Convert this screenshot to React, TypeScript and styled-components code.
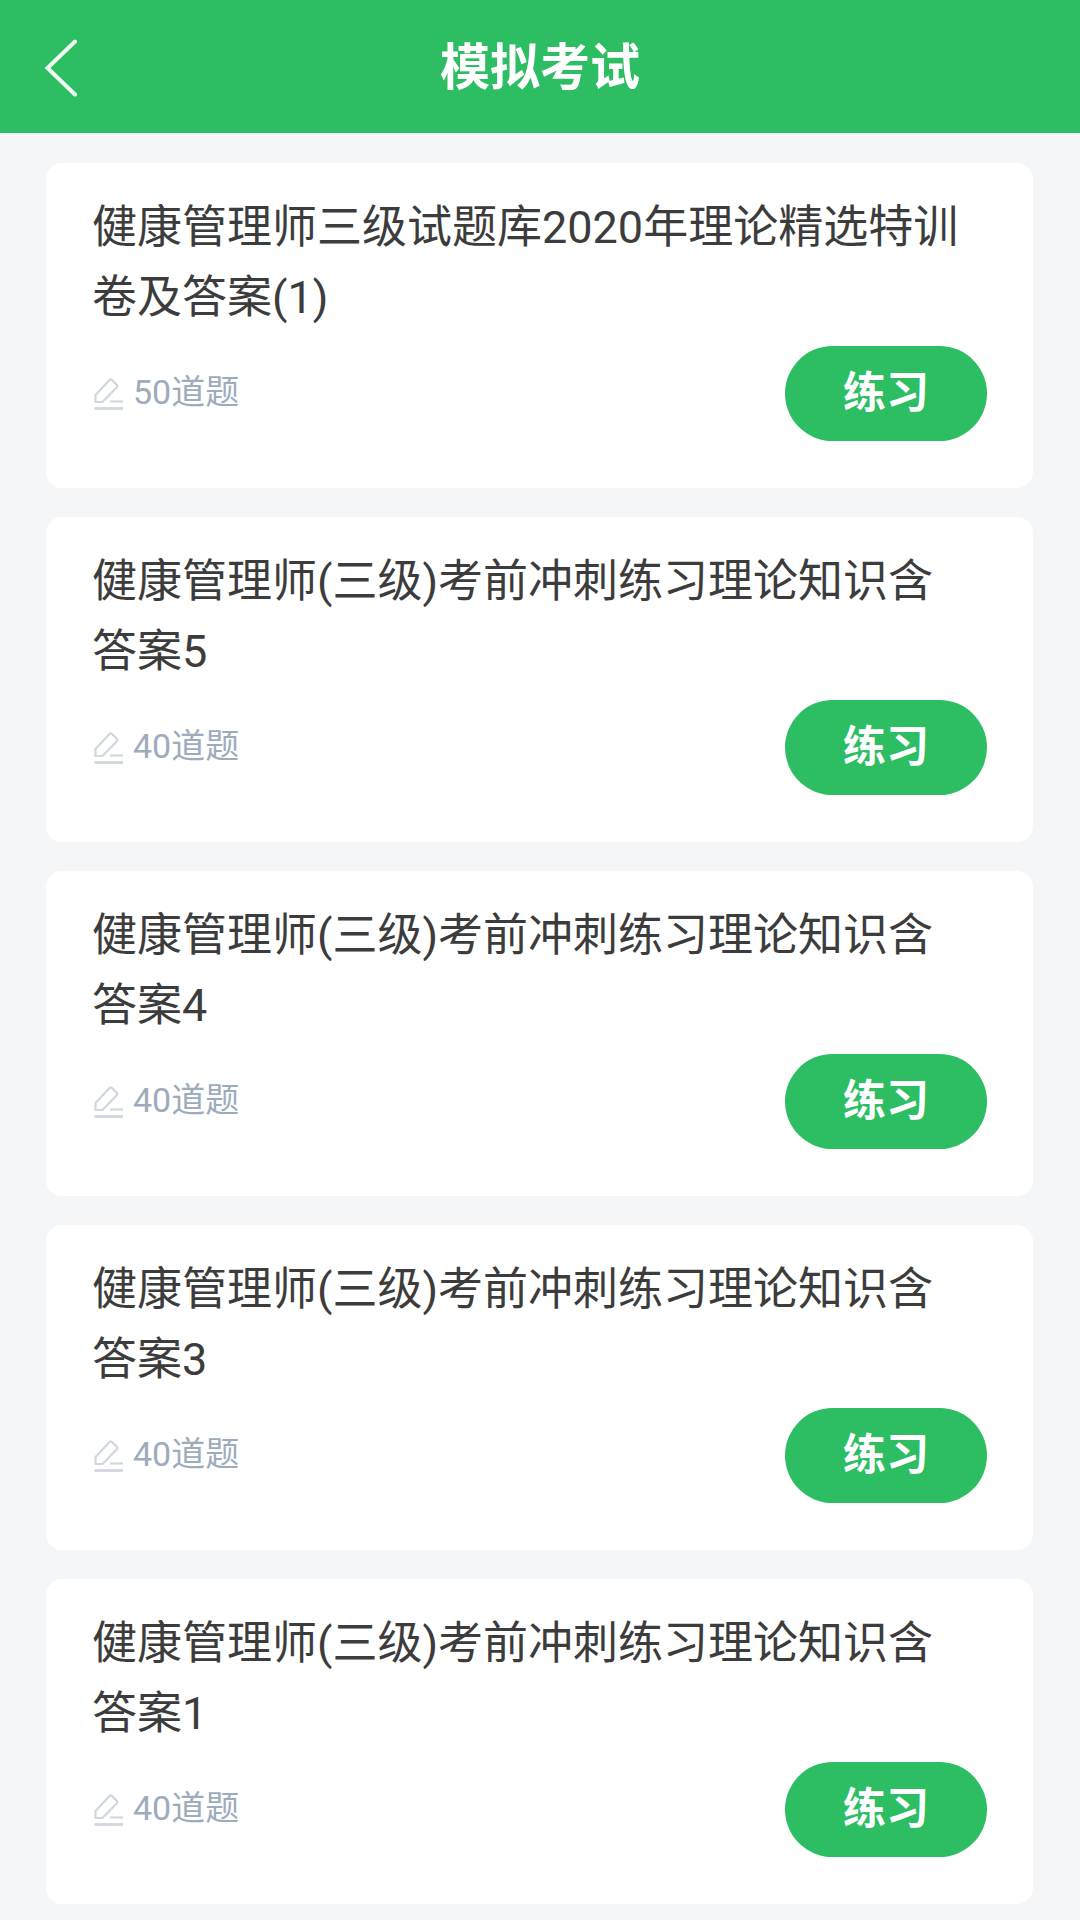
import React from "react";
import styled, { createGlobalStyle } from "styled-components";

const GlobalStyle = createGlobalStyle`
  *, *::before, *::after {
    box-sizing: border-box;
  }

  body {
    margin: 0;
    background: #f5f6f8;
    color: #3c3c3c;
    font-family: Roboto, "Noto Sans CJK SC", sans-serif;
  }
`;

const Header = styled.header`
  display: grid;
  grid-template-columns: 100px 1fr 100px;
  align-items: center;
  height: 133px;
  padding-top: 2px;
  background: #2dbd62;
  color: #fff;
`;

const BackButton = styled.button`
  display: flex;
  align-items: center;
  height: 100%;
  padding: 0 0 0 44px;
  border: 0;
  background: none;
  color: inherit;
  cursor: pointer;
`;

const PageTitle = styled.h1`
  margin: 0;
  font-size: 50px;
  font-weight: 700;
  line-height: 72px;
  text-align: center;
`;

const ExamList = styled.ul`
  display: flex;
  flex-direction: column;
  gap: 29px;
  margin: 0;
  padding: 30px 47px 16px 46px;
  list-style: none;
`;

const Card = styled.li`
  padding: 30px 46px 47px;
  border-radius: 16px;
  background: #fff;
`;

const CardTitle = styled.h2`
  margin: 0 0 13px;
  padding-right: 16px;
  font-size: 45px;
  font-weight: 400;
  line-height: 70px;
`;

const CardFooter = styled.div`
  display: flex;
  align-items: center;
  justify-content: space-between;
`;

const Meta = styled.span`
  display: flex;
  align-items: center;
  gap: 8px;
  color: #9eabbc;
`;

const Count = styled.span`
  padding-bottom: 4px;
  font-size: 34px;
  line-height: 48px;
`;

const PracticeButton = styled.button`
  width: 202px;
  height: 95px;
  padding: 0 0 2px;
  border: 0;
  border-radius: 48px;
  background: #2dbd62;
  color: #fff;
  font-family: inherit;
  font-size: 43px;
  font-weight: 700;
  line-height: 60px;
  cursor: pointer;
`;

function BackIcon() {
  return (
    <svg width="34" height="58" viewBox="0 0 34 58" fill="none" aria-hidden="true">
      <path
        d="M31 2.5 3.5 29 31 55.5"
        stroke="#fff"
        strokeOpacity="0.92"
        strokeWidth="4"
        strokeLinecap="round"
      />
    </svg>
  );
}

function PencilIcon() {
  return (
    <svg width="33" height="34" viewBox="0 0 33 34" fill="none" stroke="#d0d7e1" strokeWidth="2.2" aria-hidden="true">
      <path
        d="M3.5 25V18L17.5 3Q18.8 1.8 20 3L24.6 7.6Q26 9 24.6 10.5L10.5 25Z"
        strokeLinejoin="round"
      />
      <path d="M18 24.5H31" />
      <path d="M2.5 31.5H31" strokeWidth="2.8" />
    </svg>
  );
}

interface Exam {
  title: string;
  count: number;
}

const exams: Exam[] = [
  { title: "健康管理师三级试题库2020年理论精选特训卷及答案(1)", count: 50 },
  { title: "健康管理师(三级)考前冲刺练习理论知识含答案5", count: 40 },
  { title: "健康管理师(三级)考前冲刺练习理论知识含答案4", count: 40 },
  { title: "健康管理师(三级)考前冲刺练习理论知识含答案3", count: 40 },
  { title: "健康管理师(三级)考前冲刺练习理论知识含答案1", count: 40 },
];

export default function App() {
  return (
    <>
      <GlobalStyle />
      <Header>
        <BackButton type="button" aria-label="返回">
          <BackIcon />
        </BackButton>
        <PageTitle>模拟考试</PageTitle>
      </Header>
      <main>
        <ExamList>
          {exams.map((exam) => (
            <Card key={exam.title}>
              <CardTitle>{exam.title}</CardTitle>
              <CardFooter>
                <Meta>
                  <PencilIcon />
                  <Count>{exam.count}道题</Count>
                </Meta>
                <PracticeButton type="button">练习</PracticeButton>
              </CardFooter>
            </Card>
          ))}
        </ExamList>
      </main>
    </>
  );
}
